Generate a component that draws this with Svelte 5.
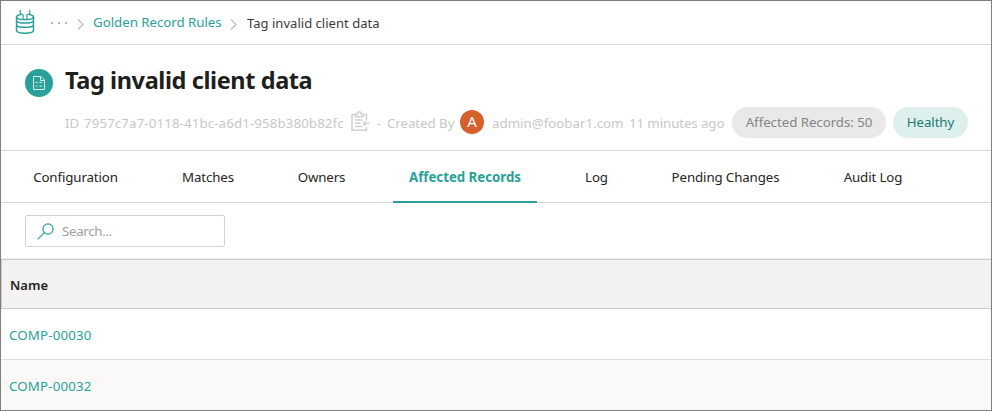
<script>
  const tabs = [
    { label: 'Configuration', width: 117 },
    { label: 'Matches', width: 84 },
    { label: 'Owners', width: 79 },
    { label: 'Affected Records', width: 144 },
    { label: 'Log', width: 55 },
    { label: 'Pending Changes', width: 139 },
    { label: 'Audit Log', width: 92 }
  ];
  let active = $state('Affected Records');
  const records = ['COMP-00030', 'COMP-00032'];
</script>

<main class="window">
  <nav class="crumbs">
    <svg class="logo" width="20" height="26" viewBox="0 0 20 26" fill="none" stroke="#2aa198" stroke-width="1.5">
      <path d="M5.200 1v3.500l2.900 1.300v4M14.800 1v3.500l-2.900 1.300v4" stroke-width="1.200" />
      <path d="M6 5.600C3.300 6 1.500 6.900 1.500 8c0 1.600 3.800 2.600 8.500 2.600s8.500-1 8.500-2.600c0-1.100-1.800-2-4.500-2.400" />
      <path d="M1.500 8v3.200c0 1.700 3.800 2.900 8.500 2.900s8.500-1.200 8.500-2.900V8M1.500 12.400v3c0 1.700 3.800 2.900 8.500 2.900s8.500-1.200 8.500-2.900v-3M1.500 16.600v4.600c0 1.800 3.800 3 8.500 3s8.500-1.200 8.500-3v-4.600" />
    </svg>
    <svg class="dots" width="16" height="3" fill="#b5b5b5"><path d="M0 0h2v2H0zM7 0h2v2H7zM14 0h2v2h-2z" /></svg>
    <svg class="chev" width="7" height="11" viewBox="0 0 7 11" fill="none" stroke="#bdbdbd" stroke-width="1.2"><path d="M1 .5l5 5-5 5" /></svg>
    <a class="parent" href="#rules">Golden Record Rules</a>
    <svg class="chev second" width="7" height="11" viewBox="0 0 7 11" fill="none" stroke="#bdbdbd" stroke-width="1.2"><path d="M1 .5l5 5-5 5" /></svg>
    <span class="current">Tag invalid client data</span>
  </nav>

  <header class="summary">
    <div class="title-row">
      <span class="badge">
        <svg width="12" height="14" viewBox="0 0 12 14" fill="none" stroke="#d4eeeb">
          <path d="M.5 .5h7.500l3.500 3.500v9.500H.5zM7.500 .5v4h4" />
          <path d="M2.500 6.500h2.200M6.300 6.500h3M2.500 9.800l.8.800 1.200-1.400M6.300 10h3" stroke-width="1" />
        </svg>
      </span>
      <h1>Tag invalid client data</h1>
    </div>
    <div class="meta">
      <span class="id-label">ID</span>
      <span class="id">7957c7a7-0118-41bc-a6d1-958b380b82fc</span>
      <svg class="copy" width="19" height="20" viewBox="0 0 19 20" fill="none" stroke="#d0d0d0" stroke-width="1.500">
        <path d="M4.500 3.500H1v15.700h14.500v-3M15.500 9.500v-6H12M4.500 5.700V3.200h1.700C6.400 1.700 7.100.8 8.200.8s1.900.9 2.100 2.400H12v2.500z" />
        <path d="M4 9h7.500M4 12.200h5.500M4 15.500h7.500M18.500 12.400h-6M14.700 10.200l-2.200 2.200 2.200 2.200" />
      </svg>
      <span class="dash">-</span>
      <span class="created">Created By</span>
      <span class="avatar">A</span>
      <span class="mail">admin@foobar1.com</span>
      <span class="ago">11 minutes ago</span>
      <span class="pill count">Affected Records: 50</span>
      <span class="pill health">Healthy</span>
    </div>
  </header>

  <div class="tabs" role="tablist">
    {#each tabs as tab}
      <button role="tab" aria-selected={active === tab.label} class:active={active === tab.label} style:width="{tab.width}px" onclick={() => (active = tab.label)}>{tab.label}</button>
    {/each}
  </div>

  <div class="toolbar">
    <label class="search">
      <svg width="17" height="17" viewBox="0 0 17 17" fill="none" stroke="#2aa198" stroke-width="1.200"><circle cx="11" cy="6" r="5.100" /><path d="M7.400 9.600L.6 16.400" /></svg>
      <input placeholder="Search..." aria-label="Search" />
    </label>
  </div>

  <section class="table">
    <div class="head">Name</div>
    {#each records as record}
      <div class="row"><a href="#{record}">{record}</a></div>
    {/each}
  </section>
</main>

<style>
  .window {
    box-sizing: border-box;
    width: 992px;
    height: 411px;
    border: 1px solid #7f7f7f;
    overflow: hidden;
    background: #fff;
    color: #252423;
    font: 13.3px/20px 'Noto Sans', 'Open Sans', sans-serif;
    white-space: nowrap;
  }
  a { color: #2aa198; text-decoration: none; }
  span, h1, a, svg { flex: none; }
  .crumbs {
    box-sizing: border-box;
    height: 44px;
    border-bottom: 1px solid #d9d9d6;
    display: flex;
    align-items: center;
    padding: 0 0 0 14px;
  }
  .logo { margin-top: -2px; }
  .dots { margin: 2px 0 0 16px; }
  .chev { margin: 4px 9px 0 10px; }
  .second { margin: 4px 10px 0 8px; }
  .parent { width: 129px; letter-spacing: -0.04px; margin-top: -1px; }
  .current { font-size: 13px; letter-spacing: 0.03px; margin-top: 1px; color: #3b3a39; }
  .summary {
    box-sizing: border-box;
    height: 106px;
    border-bottom: 1px solid #d6d6d2;
    padding: 20px 0 0 24px;
  }
  .title-row { display: flex; align-items: center; height: 34px; }
  .badge {
    width: 28px;
    height: 28px;
    border-radius: 50%;
    background: #2aa198;
    display: flex;
    align-items: center;
    justify-content: center;
    margin-top: 2px;
  }
  h1 { margin: -4px 0 0 12px; font-size: 23.5px; line-height: 32px; font-weight: 700; letter-spacing: -0.4px; color: #201f1e; }
  .meta { display: flex; align-items: center; height: 31px; margin-top: 8px; padding-left: 40px; color: #c8c8c8; }
  .id-label { width: 19px; }
  .id { width: 267px; letter-spacing: 0.11px; }
  .copy { margin-top: -3px; }
  .dash { margin-left: 7px; width: 10px; }
  .created { width: 73px; letter-spacing: -0.06px; }
  .avatar {
    width: 24px;
    height: 24px;
    border-radius: 50%;
    background: #d4602c;
    color: #fff;
    text-align: center;
    font-size: 15px;
    line-height: 23px;
    margin-top: -2px;
  }
  .mail { margin-left: 8px; width: 137px; }
  .ago { width: 103px; letter-spacing: -0.1px; }
  .pill { box-sizing: border-box; height: 31px; border-radius: 16px; line-height: 31px; text-align: center; }
  .count { width: 154px; background: #e9e9e9; color: #858585; letter-spacing: -0.05px; }
  .health { margin-left: 7px; width: 75px; background: #ddf0ee; color: #1e7a72; letter-spacing: -0.1px; }
  .tabs {
    box-sizing: border-box;
    height: 52px;
    border-bottom: 1px solid #d6d6d2;
    display: flex;
    gap: 32px;
    padding-left: 16px;
  }
  button {
    box-sizing: border-box;
    height: 52px;
    flex: none;
    padding: 2px 0 0;
    border: 0;
    border-bottom: 2px solid transparent;
    background: none;
    color: #252423;
    font: inherit;
    letter-spacing: -0.12px;
    white-space: nowrap;
  }
  button.active { color: #2aa198; border-bottom-color: #2aa198; font-weight: 700; font-size: 13.3px; letter-spacing: -0.04px; }
  .toolbar { box-sizing: border-box; height: 56px; padding: 12px 0 0 24px; border-bottom: 1px solid #eee; }
  .search {
    box-sizing: border-box;
    width: 200px;
    height: 32px;
    border: 1px solid #d2d2d2;
    border-radius: 2px;
    display: flex;
    align-items: center;
    padding-left: 11px;
  }
  input { border: 0; outline: 0; padding: 0; margin-left: 8px; width: 145px; font: inherit; letter-spacing: -0.3px; background: none; }
  input::placeholder { color: #a0a0a0; opacity: 1; }
  .head {
    box-sizing: border-box;
    height: 50px;
    border: 1px solid #ccc;
    border-right: 0;
    background: #f3f2f1;
    padding-left: 8px;
    line-height: 51px;
    font-weight: 600;
    font-size: 13px;
  }
  .row { box-sizing: border-box; height: 51px; padding-left: 8px; line-height: 52px; border-bottom: 1px solid #dedede; letter-spacing: 0.15px; }
  .row:nth-child(odd) { background: #faf9f8; }
</style>
